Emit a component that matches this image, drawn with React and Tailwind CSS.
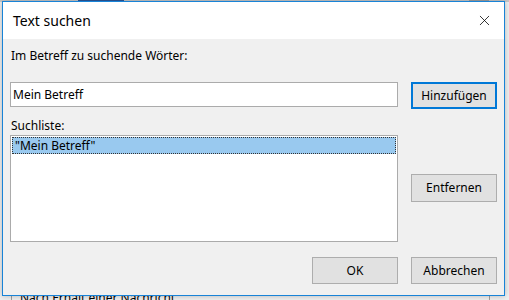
import { X } from 'lucide-react'

function Btn({ children, primary, className = '' }) {
  return (
    <button
      className={`flex items-center justify-center bg-[#e1e1e1] text-[12px] text-black ${primary ? 'border-2 border-[#0078d7]' : 'border border-[#adadad]'} ${className}`}
    >
      {children}
    </button>
  )
}

export default function App() {
  return (
    <div className="relative h-[300px] w-[509px] overflow-hidden bg-[#f0f0f0] font-['Noto_Sans',sans-serif]">
      {/* Hintergrund-Fenster */}
      <div className="absolute left-0 top-0 flex h-[2px] w-full bg-[#c8c8c8]">
        <div className="ml-[78px] h-full w-[46px] bg-[#2b579a]" />
        <div className="ml-auto mr-[20px] h-full w-[20px] bg-[#a0a0a0]" />
      </div>
      <div className="absolute left-[11px] top-[290px] h-[10px] w-px bg-[#a0a0a0]" />
      <div className="absolute left-[489px] top-[290px] h-[10px] w-px bg-[#a0a0a0]" />
      <div className="absolute left-[20px] top-[291px] text-[12px] leading-[14px] text-black">Nach Erhalt einer Nachricht</div>

      {/* Dialog */}
      <div className="absolute left-[2px] top-[1px] flex h-[295px] w-[503px] flex-col border border-[#1883d7] bg-[#f0f0f0] shadow-[0_0_6px_rgba(0,0,0,0.25)]">
        <div className="flex h-[37px] shrink-0 items-center justify-between bg-white pl-[10px] pr-[11px]">
          <span className="text-[14px] text-black">Text suchen</span>
          <X size={17} strokeWidth={1.1} className="text-black" />
        </div>

        <div className="flex flex-1 flex-col px-[7px] pt-[9px]">
          <div className="pl-px text-[12px] leading-[16px] text-black">Im Betreff zu suchende Wörter:</div>

          <div className="mt-[18px] flex items-start gap-[13px]">
            <div className="flex h-[25px] w-[388px] items-center border border-[#ababab] bg-white px-[2px] text-[12px] text-black">
              Mein Betreff
            </div>
            <Btn primary className="h-[27px] w-[86px]">Hinzufügen</Btn>
          </div>

          <div className="mt-[9px] pl-px text-[12px] leading-[16px] text-black">Suchliste:</div>

          <div className="mt-[1px] flex items-start gap-[13px]">
            <div className="h-[107px] w-[388px] border border-[#ababab] bg-white p-px">
              <div className="flex h-[17px] items-center border border-dotted border-[#333] bg-[#99c9ef] px-[2px] text-[12px] text-black">
                "Mein Betreff"
              </div>
            </div>
            <Btn className="mt-[39px] h-[28px] w-[86px]">Entfernen</Btn>
          </div>

          <div className="mt-[15px] flex justify-end gap-[13px]">
            <Btn className="h-[27px] w-[86px]">OK</Btn>
            <Btn className="h-[27px] w-[86px]">Abbrechen</Btn>
          </div>
        </div>
      </div>
    </div>
  )
}
